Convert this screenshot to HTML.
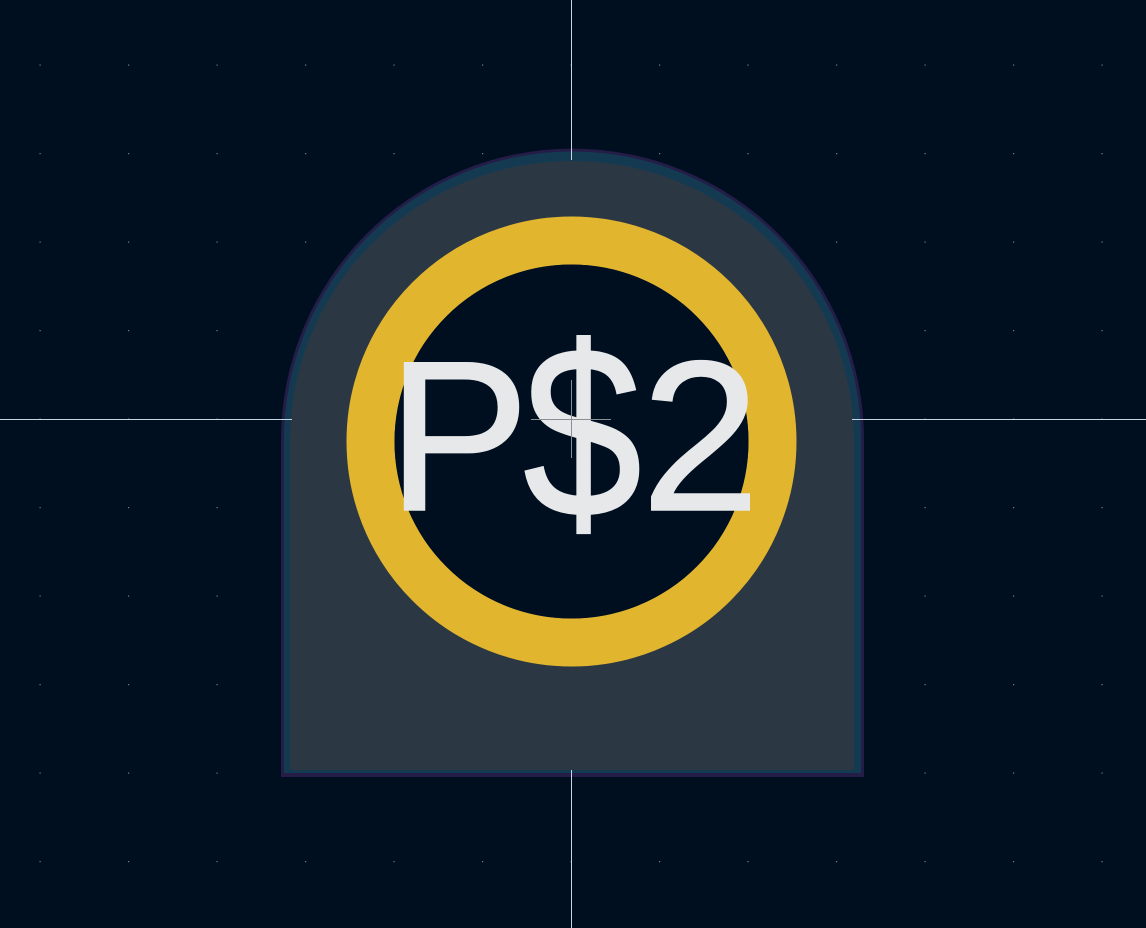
<!DOCTYPE html>
<html><head><meta charset="utf-8"><style>
html,body{margin:0;padding:0;background:#000f20;width:1146px;height:928px;overflow:hidden}
svg{display:block}
</style></head><body>
<svg width="1146" height="928" viewBox="0 0 1146 928" xmlns="http://www.w3.org/2000/svg">
<defs>
<pattern id="g" x="39.5" y="64.5" width="88.5" height="88.5" patternUnits="userSpaceOnUse">
<rect x="0" y="0" width="1.2" height="1.2" fill="#6b7f95"/>
</pattern>
</defs>
<rect width="1146" height="928" fill="#000f20"/>
<rect width="1146" height="928" fill="url(#g)"/>
<path d="M281 777 L281 440 A291 291 0 0 1 864 440 L864 777 Z" fill="#241d48"/>
<path d="M284 773 L284 440 A288 288 0 0 1 861 440 L861 773 Z" fill="#143a52"/>
<path d="M290 770 L290 441 A281 279 0 0 1 854 441 L854 770 Z" fill="#2b3843"/>
<line x1="0" y1="419.5" x2="292" y2="419.5" stroke="#c8d4de" stroke-width="1"/>
<line x1="852" y1="419.5" x2="1146" y2="419.5" stroke="#c8d4de" stroke-width="1"/>
<line x1="571.5" y1="0" x2="571.5" y2="160" stroke="#c8d4de" stroke-width="1"/>
<line x1="571.5" y1="770" x2="571.5" y2="928" stroke="#c8d4de" stroke-width="1"/>
<circle cx="571.5" cy="441.5" r="201" fill="none" stroke="#e2b52f" stroke-width="48"/>
<circle cx="571.5" cy="441.5" r="177" fill="#000f20"/>
<g font-family="Liberation Sans, sans-serif" font-size="214" fill="#e6e8ea" stroke="#e6e8ea" stroke-width="1.5">
<text x="387" y="510">P</text>
<text x="523" y="510" transform="matrix(1,0,0,1.14,0,-65)">$</text>
<text x="641" y="510">2</text>
</g>
<line x1="531" y1="419.5" x2="611" y2="419.5" stroke="#8a8f94" stroke-width="1"/>
<line x1="571.5" y1="380" x2="571.5" y2="458" stroke="#8a8f94" stroke-width="1"/>
</svg>
</body></html>
